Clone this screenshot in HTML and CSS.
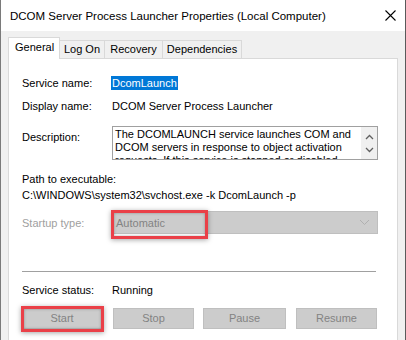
FILE: index.html
```html
<!DOCTYPE html>
<html lang="en">
<head>
    <meta charset="UTF-8">
    <title>DCOM Server Process Launcher Properties (Local Computer)</title>
    <link rel="stylesheet" href="styles.css">
</head>
<body>
    <div class="window">
        <div class="title-bar">
            <span class="title">DCOM Server Process Launcher Properties (Local Computer)</span>
            <svg class="close" width="11" height="11" viewBox="0 0 11 11"><path d="M0.5 0.5L10.5 10.5M10.5 0.5L0.5 10.5" stroke="#000" stroke-width="1.1"/></svg>
        </div>
        <div class="dialog">
            <div class="tabs">
                <div class="tab tab-general active">General</div>
                <div class="tab tab-logon">Log On</div>
                <div class="tab tab-recovery">Recovery</div>
                <div class="tab tab-deps">Dependencies</div>
            </div>
            <div class="panel">
                <div class="row row-name">
                    <span class="label">Service name:</span>
                    <span class="value"><span class="selected">DcomLaunch</span></span>
                </div>
                <div class="row row-display">
                    <span class="label">Display name:</span>
                    <span class="value">DCOM Server Process Launcher</span>
                </div>
                <div class="row row-desc">
                    <span class="label">Description:</span>
                    <div class="desc-box">
                        <div class="desc-text">The DCOMLAUNCH service launches COM and DCOM servers in response to object activation requests. If this service is stopped or disabled, programs using COM or DCOM will not function properly.</div>
                        <div class="scrollbar">
                            <svg width="9" height="6" viewBox="0 0 9 6"><path d="M1 5L4.5 1.5L8 5" fill="none" stroke="#606060" stroke-width="1.3"/></svg>
                            <svg width="9" height="6" viewBox="0 0 9 6"><path d="M1 1L4.5 4.5L8 1" fill="none" stroke="#606060" stroke-width="1.3"/></svg>
                        </div>
                    </div>
                </div>
                <div class="path-label">Path to executable:</div>
                <div class="path-value">C:\WINDOWS\system32\svchost.exe -k DcomLaunch -p</div>
                <div class="row row-startup">
                    <span class="label disabled">Startup type:</span>
                    <div class="combo">
                        <span>Automatic</span>
                        <svg width="11" height="7" viewBox="0 0 11 7"><path d="M1 1L5.5 5.5L10 1" fill="none" stroke="#b0b0b0" stroke-width="1"/></svg>
                    </div>
                    <div class="mark mark-combo"></div>
                </div>
                <div class="separator"></div>
                <div class="row row-status">
                    <span class="label">Service status:</span>
                    <span class="value">Running</span>
                </div>
                <div class="buttons">
                    <div class="btn btn-start">Start<div class="mark mark-start"></div></div>
                    <div class="btn btn-stop">Stop</div>
                    <div class="btn btn-pause">Pause</div>
                    <div class="btn btn-resume">Resume</div>
                </div>
            </div>
        </div>
    </div>
</body>
</html>
```

FILE: styles.css
```css
* {
    box-sizing: border-box;
}
body {
    margin: 0;
    font-family: 'Liberation Sans', Arial, sans-serif;
    font-size: 11px;
    line-height: 14px;
    color: #000;
    background: #f0f0f0;
}
.window {
    width: 406px;
    height: 340px;
    border-left: 1px solid #7a7a7a;
    border-right: 1px solid #5a5a5a;
    background: #f0f0f0;
    overflow: hidden;
}
.title-bar {
    height: 31px;
    background: #fff;
    display: flex;
    align-items: center;
    justify-content: space-between;
    padding: 0 9px 0 9px;
}
.title {
    font-size: 11.5px;
    color: #000;
}
.close {
    display: block;
}
.dialog {
    padding: 6px 8px 0 7px;
}
.tabs {
    display: flex;
    align-items: flex-end;
    height: 21px;
    position: relative;
    z-index: 1;
}
.tab {
    height: 18px;
    line-height: 17px;
    border: 1px solid #d9d9d9;
    border-bottom: none;
    margin-left: -1px;
    background: #f0f0f0;
    text-align: center;
    white-space: nowrap;
}
.tab.active {
    height: 22px;
    line-height: 19px;
    background: #fff;
    margin-bottom: -1px;
    margin-left: 0;
    text-align: left;
    padding-left: 6px;
}
.tab-general { width: 52px; }
.tab-logon { width: 46px; }
.tab-recovery { width: 59px; }
.tab-deps { width: 80px; }
.panel {
    position: relative;
    background: #fff;
    border: 1px solid #d9d9d9;
    height: 300px;
    padding: 0 0 0 13px;
    width: 390px;
}
.row {
    display: flex;
    align-items: flex-start;
    position: relative;
}
.label {
    width: 90px;
    flex: none;
}
.label.disabled {
    color: #a0a0a0;
}
.row-name {
    margin-top: 17px;
    height: 14px;
}
.selected {
    background: #0078d7;
    color: #fff;
    padding: 1px 1px;
    margin-left: -1px;
}
.row-display {
    margin-top: 9px;
    height: 14px;
}
.row-desc {
    margin-top: 13px;
}
.row-desc .label {
    padding-top: 4px;
}
.desc-box {
    width: 266px;
    height: 34px;
    border: 1px solid #a0a0a0;
    display: flex;
    overflow: hidden;
}
.desc-text {
    flex: 1;
    padding: 1px 2px 0 2px;
    line-height: 13px;
    height: 32px;
    overflow: hidden;
}
.scrollbar {
    width: 16px;
    background: #f0f0f0;
    display: flex;
    flex-direction: column;
    align-items: center;
    justify-content: space-around;
    padding: 3px 0;
}
.scrollbar svg {
    display: block;
}
.path-label {
    margin-top: 12px;
    height: 16px;
}
.path-value {
    height: 16px;
}
.row-startup {
    margin-top: 7px;
    align-items: center;
}
.combo {
    width: 266px;
    height: 23px;
    background: #cccccc;
    border: 1px solid #bfbfbf;
    display: flex;
    align-items: center;
    justify-content: space-between;
    padding: 0 7px 0 3px;
    color: #838383;
}
.combo svg {
    display: block;
}
.mark {
    position: absolute;
    border: 3px solid #ea4048;
    box-shadow: 0 1px 5px rgba(0, 0, 0, 0.35), inset 0 0 3px rgba(0, 0, 0, 0.3);
    pointer-events: none;
}
.mark-combo {
    left: 89px;
    top: -1px;
    width: 97px;
    height: 29px;
}
.separator {
    height: 1px;
    background: #a0a0a0;
    margin: 37px 21px 0 0;
}
.row-status {
    margin-top: 11px;
    height: 14px;
}
.buttons {
    display: flex;
    margin-top: 11px;
}
.btn {
    position: relative;
    height: 21px;
    line-height: 19px;
    text-align: center;
    background: #cccccc;
    border: 1px solid #bfbfbf;
    color: #838383;
}
.btn-start { width: 80px; }
.btn-stop { width: 81px; margin-left: 11px; }
.btn-pause { width: 83px; margin-left: 9px; }
.btn-resume { width: 81px; margin-left: 10px; }
.mark-start {
    left: -2px;
    top: -3px;
    width: 83px;
    height: 26px;
}
```
